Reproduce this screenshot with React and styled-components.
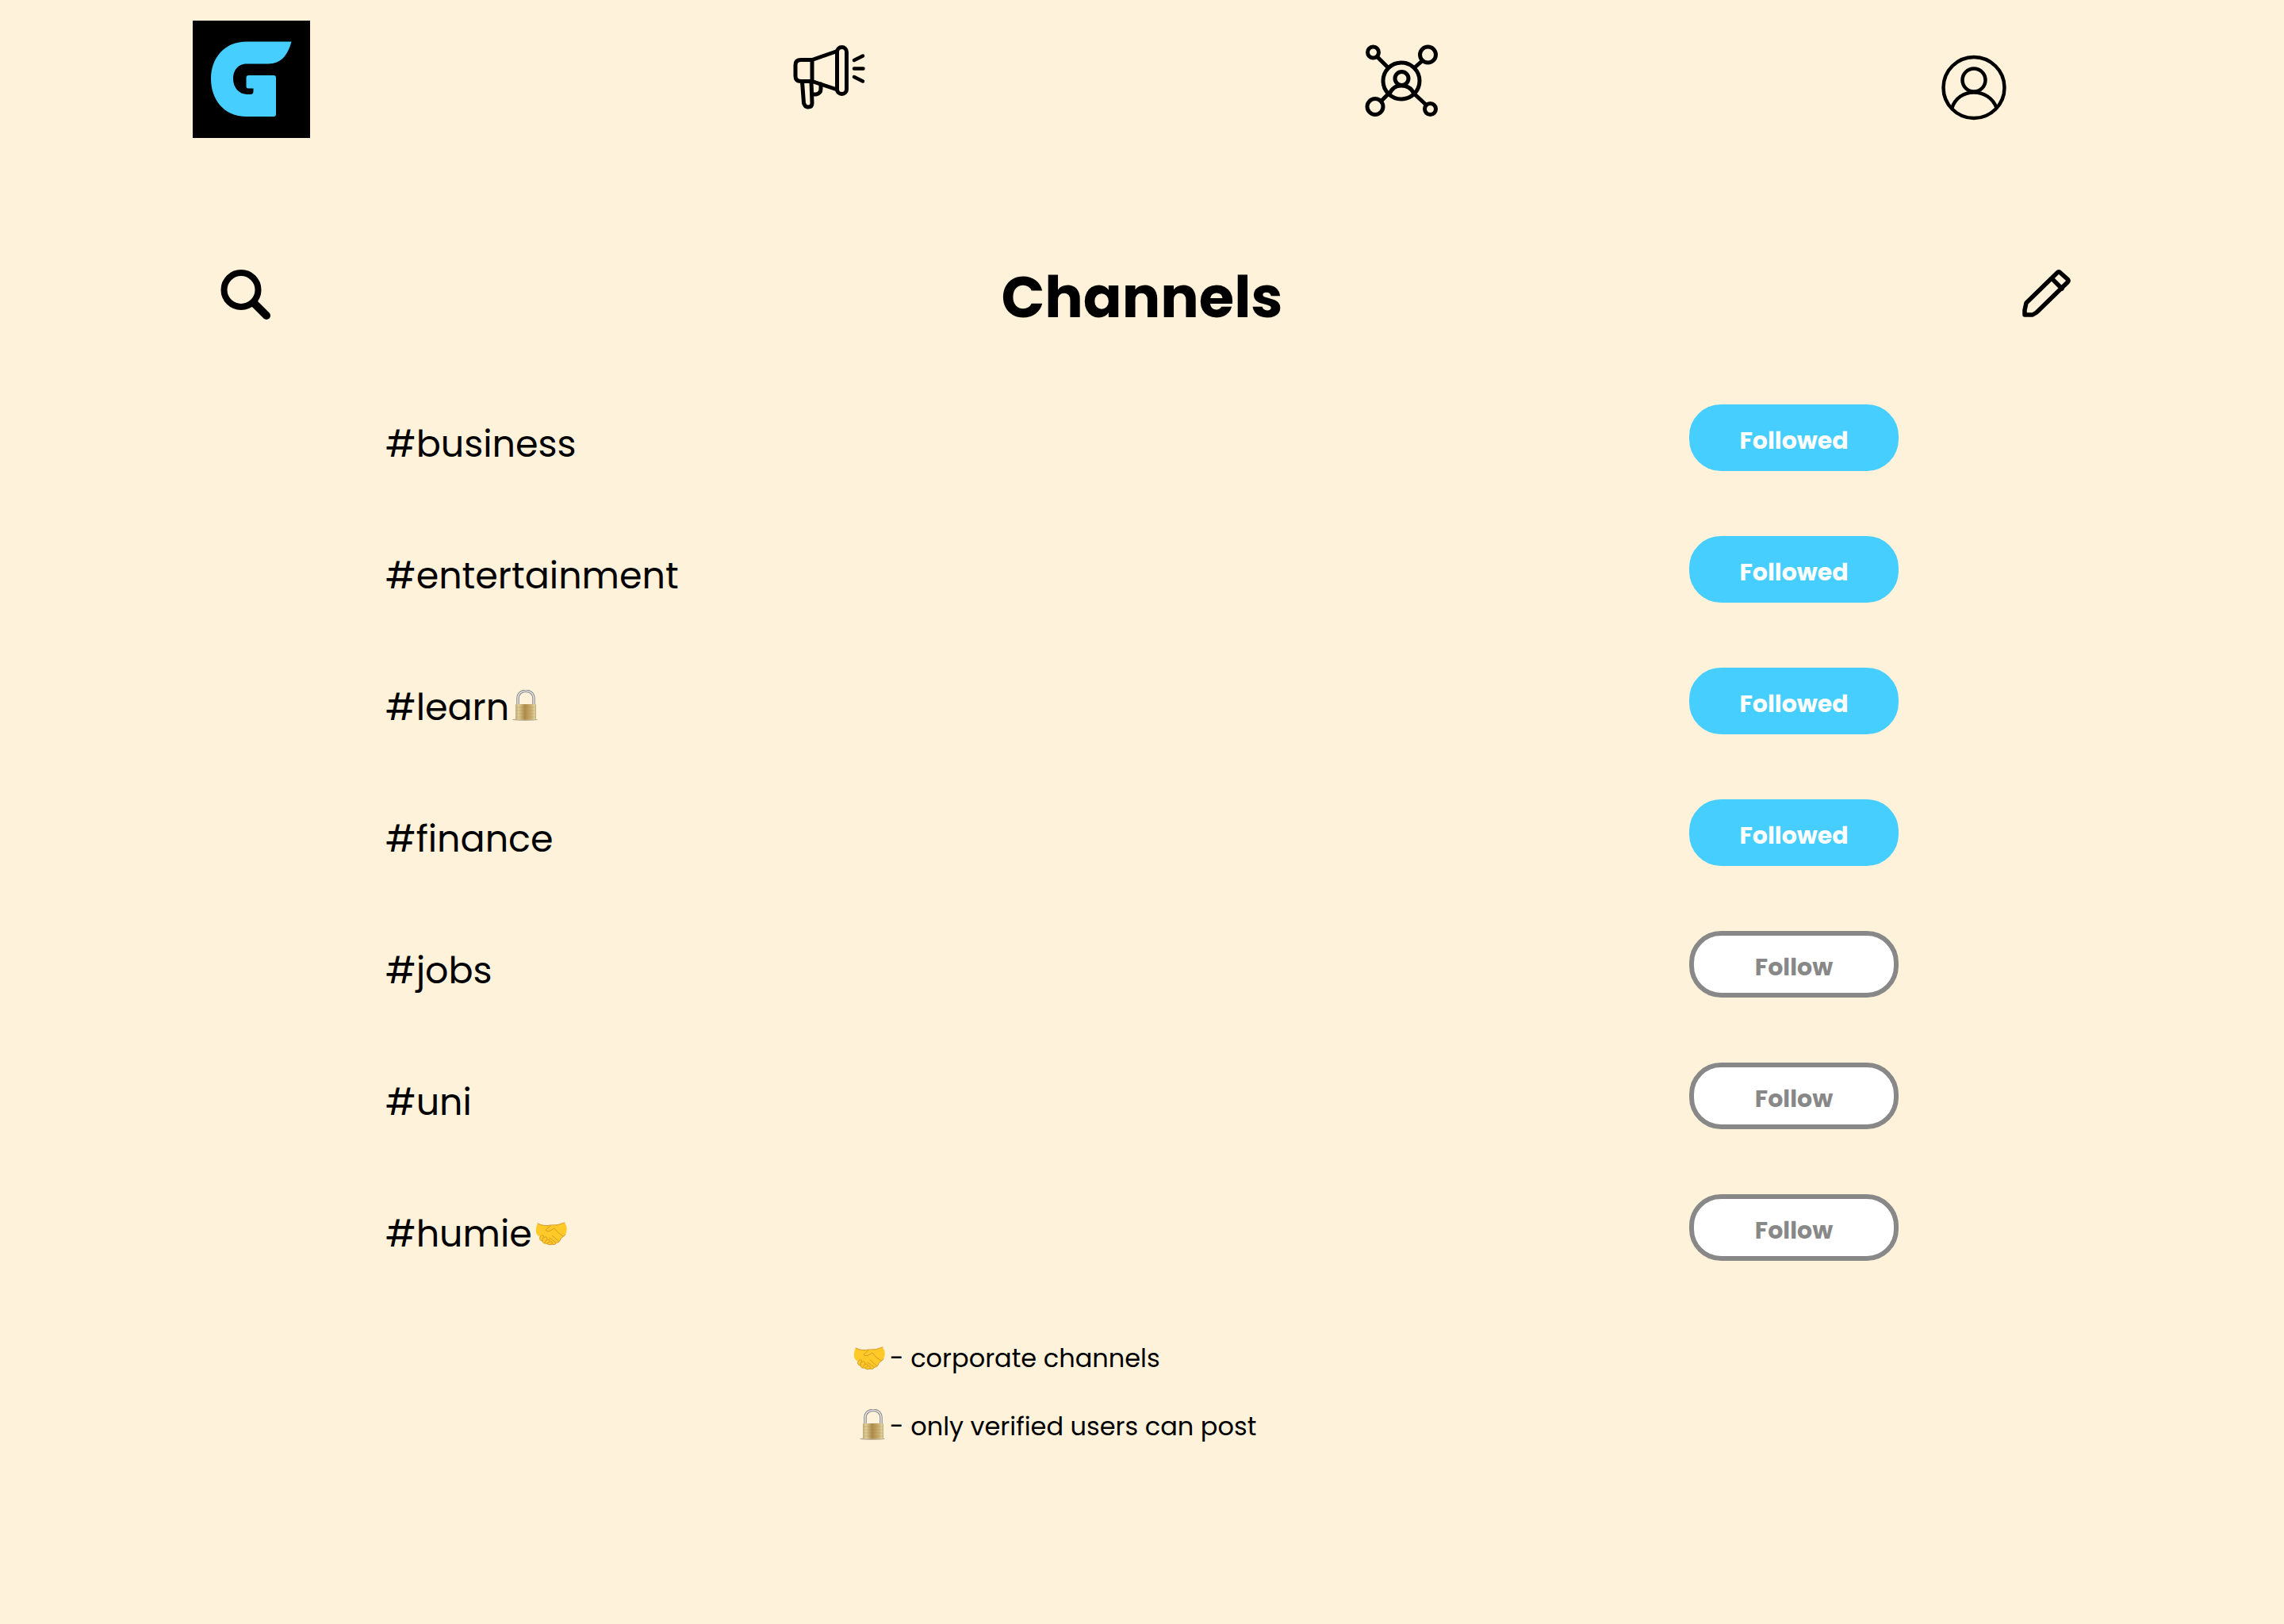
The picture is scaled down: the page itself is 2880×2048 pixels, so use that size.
import React, { useState } from "react";
import styled, { createGlobalStyle } from "styled-components";

const GlobalStyle = createGlobalStyle`
  *, *::before, *::after { box-sizing: border-box; }
  body {
    margin: 0;
    min-height: 100vh;
    background: #fff2db;
    color: #000;
    font-family: Poppins, Inter, "Liberation Sans", sans-serif;
  }
`;

const Header = styled.header`
  padding: 26px 317px 0 243px;
`;

const Nav = styled.nav`
  display: flex;
  justify-content: space-between;
`;

const NavLink = styled.a`
  display: block;
  width: 148px;
  height: 148px;
  color: inherit;
  svg { display: block; }
`;

const TitleBar = styled.div`
  display: flex;
  justify-content: space-between;
  align-items: center;
  height: 72px;
  margin-top: 161px;
  padding: 0 269px;
`;

const IconButton = styled.button`
  width: 72px;
  height: 72px;
  padding: 0;
  border: 0;
  background: none;
  color: inherit;
  cursor: pointer;
  svg { display: block; }
`;

const Title = styled.h1`
  margin: 0;
  padding-top: 8px;
  font-size: 72px;
  font-weight: 700;
  line-height: 72px;
`;

const ChannelList = styled.ul`
  display: grid;
  gap: 82px;
  margin: 103px 0 0;
  padding: 0 486px;
  list-style: none;
`;

const Channel = styled.li`
  display: flex;
  justify-content: space-between;
  align-items: center;
  height: 84px;
`;

const ChannelLink = styled.a`
  display: flex;
  align-items: center;
  gap: 4px;
  padding-top: 16px;
  color: inherit;
  font-size: 46px;
  line-height: 60px;
  text-decoration: none;
`;

const FollowButton = styled.button`
  width: 264px;
  height: 84px;
  padding: 8px 0 0;
  border: 6px solid ${(p) => (p.$followed ? "#45ceff" : "#888")};
  border-radius: 40px;
  background: ${(p) => (p.$followed ? "#45ceff" : "#fff")};
  color: ${(p) => (p.$followed ? "#fff" : "#888")};
  font-family: inherit;
  font-size: 30px;
  font-weight: 700;
  line-height: 36px;
  cursor: pointer;
`;

const Legend = styled.footer`
  display: grid;
  gap: 42px;
  margin: 101px 0 0 calc(50% - 366px);
  font-size: 32px;
  line-height: 44px;
`;

const LegendItem = styled.p`
  display: grid;
  grid-template-columns: 42px auto;
  justify-content: start;
  column-gap: 6px;
  margin: 0;
`;

const Mark = styled.svg`
  display: block;
  flex: none;
  justify-self: end;
  width: ${(p) => p.$width}px;
  height: 44px;
`;

const line = { fill: "none", stroke: "currentColor", strokeLinecap: "round", strokeLinejoin: "round" };

function Logo() {
  return (
    <svg width="148" height="148" viewBox="0 0 148 148" aria-hidden="true">
      <rect width="148" height="148" fill="#000" />
      <path
        fill="#45ceff"
        d="M68 26.5H124.500C120 43 112 54.500 95 54.500H68C56 54.500 51 64 51 73.500C51 84 58 93 69 93H73Q76.500 93 76.500 89V85.500H70Q67.500 85.500 67.500 83V72Q67.500 69 70.500 69H102Q105 69 105 72V118Q105 121 102 121H68C38 121 23 98 23 73.500C23 47 40 26.500 68 26.500Z"
      />
    </svg>
  );
}

function Megaphone() {
  return (
    <svg width="148" height="148" viewBox="0 0 148 148" aria-hidden="true">
      <g {...line} strokeWidth="5">
        <path d="M57 49.500H43Q36 49.500 36 56V70Q36 76.500 43 76.500H57Z" />
        <path d="M57 49.500L88.500 38.500V87L57 76.500" />
        <rect x="88.500" y="33.500" width="12" height="59" rx="6" />
        <path d="M44.500 77L46.500 104Q48 109 52 109Q57 109 57 104L56 77" />
        <path d="M57 93H62Q68 92 68 86V80" />
        <path d="M110 50L121 44.500M110 60.500H121.500M110 71L121 76.500" strokeWidth="4.500" />
      </g>
    </svg>
  );
}

function Network() {
  return (
    <svg width="148" height="148" viewBox="0 0 148 148" aria-hidden="true">
      <g {...line} strokeWidth="5">
        <circle cx="76" cy="76" r="23" />
        <circle cx="76.500" cy="73" r="8.500" />
        <path d="M61 93Q65 82 76 82Q88 82 92 93" />
        <circle cx="40.500" cy="40" r="7" />
        <circle cx="109.500" cy="43" r="10" />
        <circle cx="43" cy="108.500" r="10" />
        <circle cx="112.500" cy="111.500" r="7" />
        <path d="M46 46L59 59M102 51L93 59M51 101L60 92M92 92L107 106" />
      </g>
    </svg>
  );
}

function Profile() {
  return (
    <svg width="148" height="148" viewBox="0 0 148 148" aria-hidden="true">
      <g {...line} strokeWidth="4.500">
        <circle cx="74" cy="84.500" r="38.500" />
        <circle cx="74" cy="75" r="14.500" />
        <path d="M46.500 110C50 98 61 90.500 74 90.500C87 90.500 98 98 102.500 110" />
      </g>
    </svg>
  );
}

function Search() {
  return (
    <svg width="72" height="72" viewBox="0 0 72 72" aria-hidden="true">
      <circle cx="35" cy="30.500" r="21.500" fill="none" stroke="currentColor" strokeWidth="8" />
      <path d="M52 48L67 63" stroke="currentColor" strokeWidth="10" strokeLinecap="round" />
    </svg>
  );
}

function Pencil() {
  return (
    <svg width="72" height="72" viewBox="0 0 72 72" aria-hidden="true">
      <path
        d="M14 62V56L16 47L55 9Q57 7 59 9L68 17Q70 19 68 21L29 59L24 62ZM48 16L61 29"
        {...line}
        strokeWidth="5.500"
      />
    </svg>
  );
}

function Lock() {
  return (
    <Mark $width={32} viewBox="0 3 32 44" role="img" aria-label="Verified users only">
      <defs>
        <linearGradient id="brass">
          <stop offset="0" stopColor="#c2ab70" />
          <stop offset="0.150" stopColor="#dfcf9d" />
          <stop offset="0.450" stopColor="#ae8b4a" />
          <stop offset="0.800" stopColor="#cdb477" />
          <stop offset="0.930" stopColor="#e2d4a4" />
          <stop offset="1" stopColor="#b7a36d" />
        </linearGradient>
      </defs>
      <ellipse cx="16" cy="40.500" rx="16" ry="1.500" fill="#8d8065" opacity="0.600" />
      <path d="M7 23V14C7 1 27 1 27 14V23" fill="none" stroke="#858585" strokeWidth="3.500" />
      <path d="M7 23V14C7 1 27 1 27 14V23" fill="none" stroke="#e5e5e5" strokeWidth="1.500" />
      <rect x="4" y="21" width="26" height="19.500" rx="1" fill="url(#brass)" />
      <path d="M5 25H29M5 29H29M5 33H29M5 37H29" stroke="#a3823f" strokeWidth="1" opacity="0.250" />
    </Mark>
  );
}

function Handshake() {
  return (
    <Mark $width={40} viewBox="0 0 40 44" role="img" aria-label="Corporate">
      <path
        fill="#ffc928"
        d="M3 9Q11 13 19 11Q28 12 37 8Q42 15 38 23L32 28C31 32 29 33 27 33C25 36 22 36 21 35C18 37 15 36 15 34C11 35 9 33 9 31C6 31 5 29 6 26Q0 23 1 16Q1 12 3 9Z"
      />
      <g {...line} stroke="#d79b25" strokeWidth="1">
        <path d="M3 9Q11 13 19 11Q28 12 37 8M19 12L13 17Q14 20 19 18L24 15Q28 21 35 25M6 26Q9 22 11 25Q8 28 9 31M11 27Q14 24 15 28L12 33M15 30Q19 27 18 32L15 34M19 32Q22 30 21 35M21 24L29 31M18 27L26 33" />
        <path d="M6 26Q4 30 9 31Q9 35 15 34Q16 37 21 35Q25 37 27 33Q31 33 32 28L38 23" />
      </g>
    </Mark>
  );
}

const initialChannels = [
  { name: "business", followed: true },
  { name: "entertainment", followed: true },
  { name: "learn", followed: true, mark: Lock },
  { name: "finance", followed: true },
  { name: "jobs", followed: false },
  { name: "uni", followed: false },
  { name: "humie", followed: false, mark: Handshake },
];

export default function App() {
  const [channels, setChannels] = useState(initialChannels);
  const toggle = (name) =>
    setChannels((list) => list.map((c) => (c.name === name ? { ...c, followed: !c.followed } : c)));

  return (
    <>
      <GlobalStyle />
      <Header>
        <Nav aria-label="Main">
          <NavLink href="#home" aria-label="Home"><Logo /></NavLink>
          <NavLink href="#announcements" aria-label="Announcements"><Megaphone /></NavLink>
          <NavLink href="#network" aria-label="Network"><Network /></NavLink>
          <NavLink href="#profile" aria-label="Profile"><Profile /></NavLink>
        </Nav>
      </Header>
      <main>
        <TitleBar>
          <IconButton type="button" aria-label="Search"><Search /></IconButton>
          <Title>Channels</Title>
          <IconButton type="button" aria-label="Edit"><Pencil /></IconButton>
        </TitleBar>
        <ChannelList>
          {channels.map(({ name, followed, mark: ChannelMark }) => (
            <Channel key={name}>
              <ChannelLink href={`#${name}`}>
                #{name}
                {ChannelMark && <ChannelMark />}
              </ChannelLink>
              <FollowButton type="button" $followed={followed} onClick={() => toggle(name)}>
                {followed ? "Followed" : "Follow"}
              </FollowButton>
            </Channel>
          ))}
        </ChannelList>
      </main>
      <Legend>
        <LegendItem><Handshake />- corporate channels</LegendItem>
        <LegendItem><Lock />- only verified users can post</LegendItem>
      </Legend>
    </>
  );
}
